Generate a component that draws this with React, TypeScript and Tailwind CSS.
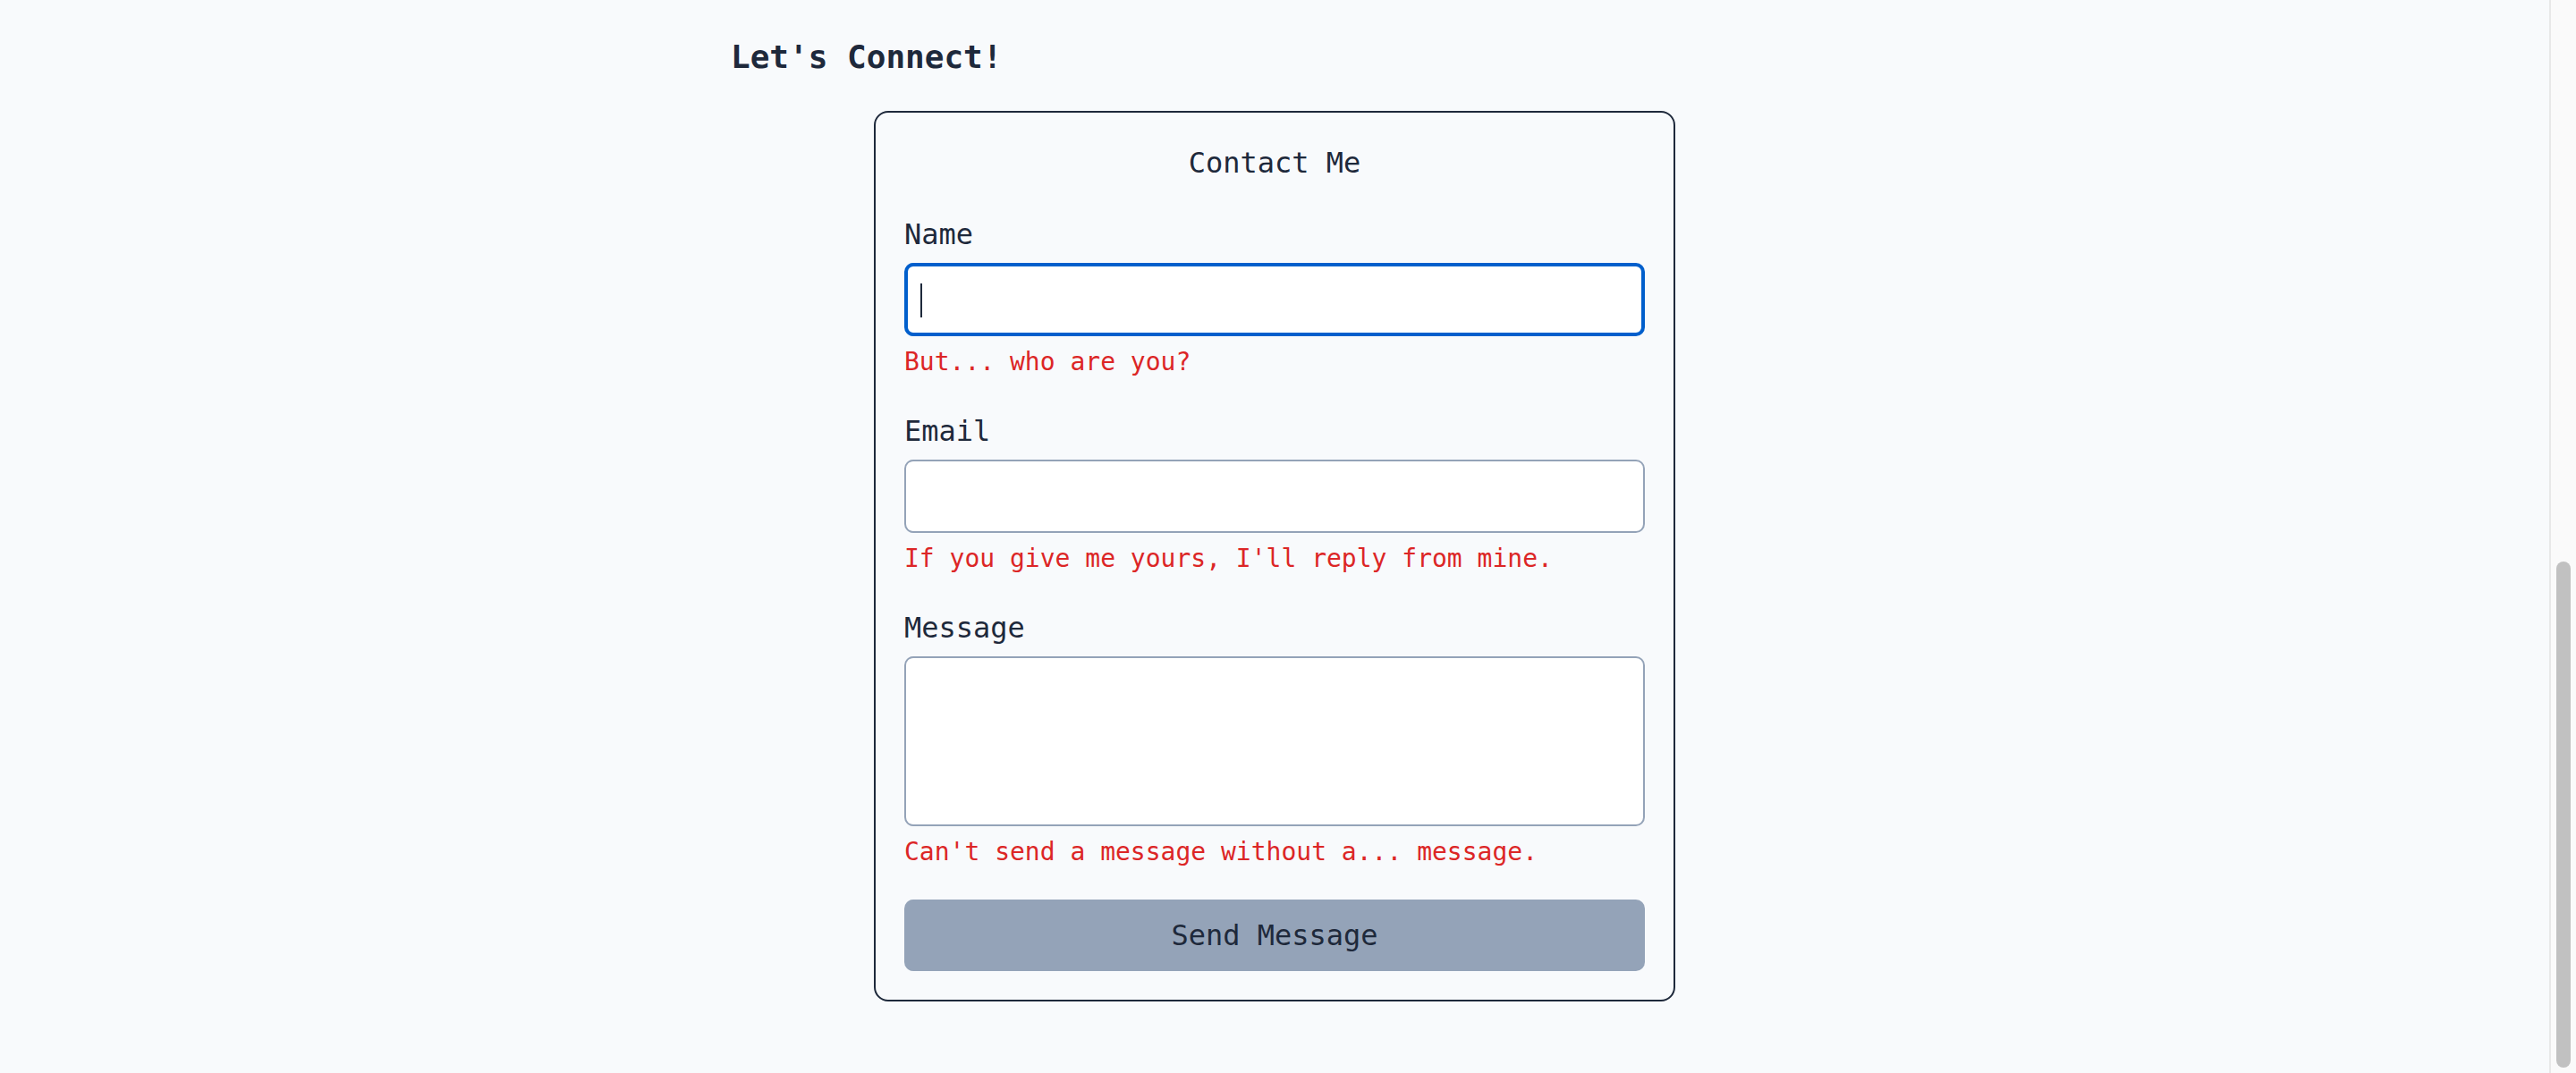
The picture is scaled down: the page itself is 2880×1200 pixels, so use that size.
import { useState } from "react";

const fields = [
  { id: "name", label: "Name", error: "But... who are you?", focused: true },
  { id: "email", label: "Email", error: "If you give me yours, I'll reply from mine." },
];

function FieldError({ text }: { text: string }) {
  return <p className="mt-2 text-[28px] leading-[42px] text-[#dc2626]">{text}</p>;
}

function ContactForm() {
  const [values, setValues] = useState({ name: "", email: "", message: "" });

  return (
    <form
      onSubmit={(e) => e.preventDefault()}
      className="mt-8 mx-auto w-[896px] border-2 border-[#1e293b] rounded-2xl p-8 flex flex-col"
    >
      <h3 className="text-center text-[32px] leading-[48px] text-[#1e293b]">Contact Me</h3>

      {fields.map((f) => (
        <div key={f.id} className="mt-8 flex flex-col">
          <label htmlFor={f.id} className="text-[32px] leading-[48px] text-[#1e293b]">
            {f.label}
          </label>
          <div className="relative mt-2">
            <input
              id={f.id}
              value={values[f.id as "name" | "email"]}
              onChange={(e) => setValues({ ...values, [f.id]: e.target.value })}
              className={`block w-full h-[82px] bg-white rounded-[10px] px-4 text-[32px] text-[#1e293b] outline-none ${
                f.focused ? "border-4 border-[#005fcc]" : "border-2 border-[#94a3b8]"
              }`}
            />
            {/* caret of the focused field */}
            {f.focused && <span className="absolute left-[18px] top-[23px] w-[2px] h-[38px] bg-[#1e293b]" />}
          </div>
          <FieldError text={f.error} />
        </div>
      ))}

      <div className="mt-8 flex flex-col">
        <label htmlFor="message" className="text-[32px] leading-[48px] text-[#1e293b]">
          Message
        </label>
        <textarea
          id="message"
          value={values.message}
          onChange={(e) => setValues({ ...values, message: e.target.value })}
          className="mt-2 block w-full h-[190px] resize-none bg-white border-2 border-[#94a3b8] rounded-[10px] px-4 py-3 text-[32px] text-[#1e293b] outline-none"
        />
        <FieldError text="Can't send a message without a... message." />
      </div>

      <button
        type="submit"
        disabled
        className="mt-8 h-[80px] w-full rounded-[10px] bg-[#94a3b8] text-[32px] text-[#1e293b]"
      >
        Send Message
      </button>
    </form>
  );
}

export default function App() {
  return (
    <div className="flex h-[1200px] w-full overflow-hidden bg-[#f8fafc] font-['DejaVu_Sans_Mono',monospace]">
      <main className="flex-1">
        <section className="max-w-[1280px] mx-auto px-8 pt-[36px]">
          <h2 className="text-[36px] leading-[56px] font-bold text-[#1e293b]">Let's Connect!</h2>
          <ContactForm />
        </section>
      </main>

      {/* window scrollbar, page scrolled to the bottom */}
      <div className="w-[30px] h-full bg-[#fafafa] border-l-2 border-[#e8e8e8] flex justify-center">
        <div className="mt-[628px] w-[16px] h-[566px] rounded-full bg-[#c1c1c1]" />
      </div>
    </div>
  );
}
